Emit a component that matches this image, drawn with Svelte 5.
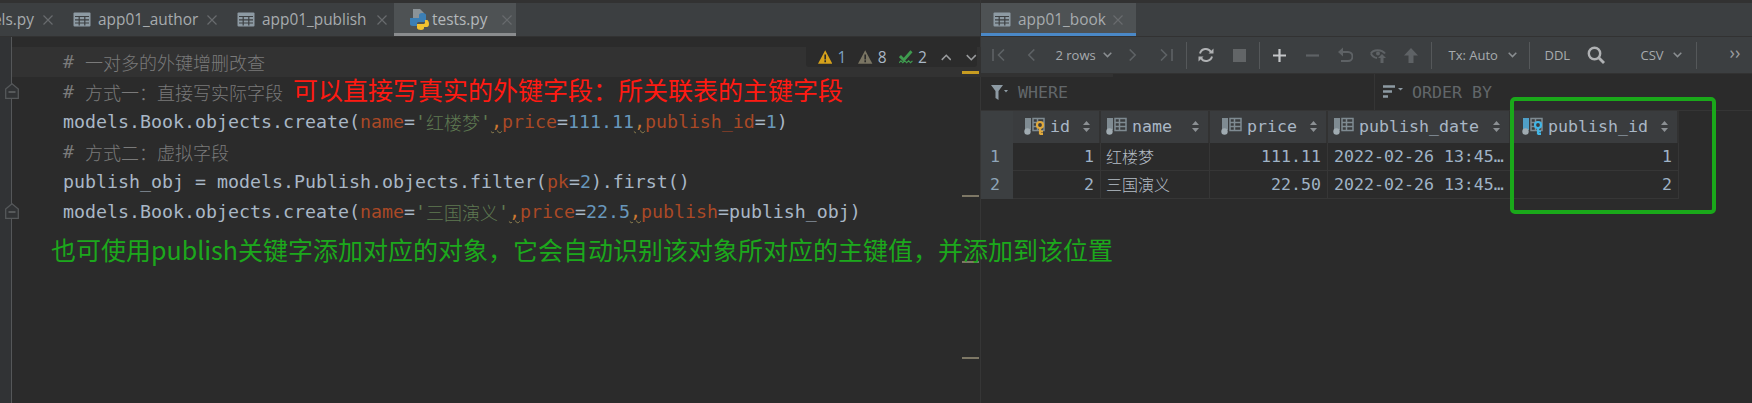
<script>
    // result grid content
    const rows = [
        { n: 1, id: 1, name: '红楼梦', price: '111.11', date: '2022-02-26 13:45…', pub: 1 },
        { n: 2, id: 2, name: '三国演义', price: '22.50', date: '2022-02-26 13:45…', pub: 2 }
    ];
</script>

{#snippet tableIcon()}
    <svg class="ticon" width="18" height="15" viewBox="0 0 18 15">
        <rect x="0.5" y="0.5" width="17" height="14" rx="1" fill="#8d9aa3" />
        <path d="M2 4.500h14M2 7.800h14M2 11h14M6.200 4.500V13.500M11.800 4.500V13.500" stroke="#3c3f41" stroke-width="1.200" fill="none" />
    </svg>
{/snippet}

{#snippet close()}
    <svg class="close" width="10" height="10" viewBox="0 0 10 10">
        <path d="M.5.5l9 9M9.500.5l-9 9" stroke="#686b6e" stroke-width="1.200" />
    </svg>
{/snippet}

{#snippet colIcon(key)}
    <svg class="colicon" width="21" height="18" viewBox="0 0 21 18">
        <rect x="1" y="1" width="6" height="12" fill={key === 'blue' ? '#4f9fc7' : '#7f8b92'} />
        <circle cx="3.500" cy="14.500" r="3.200" fill="#a0abb1" />
        <path d="M9 1.500h11v12H9zM9 5.500h11M9 9.500h11M13.500 1.500v12" stroke="#7f8b92" stroke-width="1.500" fill="none" />
        {#if key === 'gold'}
            <circle cx="16" cy="8" r="3" fill="#3a3c3e" stroke="#e0a93c" stroke-width="2.200" />
            <path d="M16 11v6.500M16 14.500h3M16 17h3" stroke="#e0a93c" stroke-width="2.200" />
        {:else if key === 'blue'}
            <circle cx="16" cy="8" r="3" fill="#3a3c3e" stroke="#41b6e6" stroke-width="2.200" />
            <path d="M16 11v6.500M16 14.500h3M16 17h3" stroke="#41b6e6" stroke-width="2.200" />
        {/if}
    </svg>
{/snippet}

{#snippet sort()}
    <svg class="sort" width="7" height="11" viewBox="0 0 7 11">
        <path d="M3.500 0L7 4H0zM3.500 11L0 7h7z" fill="#8c9094" />
    </svg>
{/snippet}

{#snippet chevron()}
    <svg class="chev" width="9" height="6" viewBox="0 0 9 6">
        <path d="M.7.7l3.800 3.900L8.300.7" stroke="#8a8e91" stroke-width="1.500" fill="none" />
    </svg>
{/snippet}

<div class="page">
    <section class="left">
        <div class="strip"></div>
        <nav class="tabs">
            <div class="tab first"><span>models.py</span>{@render close()}</div>
            <div class="tab author">{@render tableIcon()}<span>app01_author</span>{@render close()}</div>
            <div class="tab publish">{@render tableIcon()}<span>app01_publish</span>{@render close()}</div>
            <div class="tab active">
                <svg class="pyicon" width="20" height="21" viewBox="0 0 20 21">
                    <path d="M4 0h7l4 4v5H4z" fill="#8b9398" />
                    <path d="M1 15V9h9V6c0-1 1-2 3-2h1c2 0 3 1 3 2v5c0 1-1 2-2 2h-5c-2 0-2 1-2 2v2H4c-2 0-3-1-3-2z" fill="#3c7fb5" />
                    <path d="M8 15h6c1 0 2 0 2-2v-2h2c1 0 2 2 2 4s-1 3-2 3h-3v1c0 1-1 2-3 2s-4-1-4-2z" fill="#f2c230" />
                </svg>
                <span>tests.py</span>
                {@render close()}
            </div>
        </nav>

        <div class="editor">
            <div class="gutter"></div>
            <div class="code">
                <div class="line current"><span class="cm"># <i>一对多的外键增删改查</i></span></div>
                <div class="line">
                    <span class="cm"># <i>方式一：直接写实际字段</i></span><span class="note red">可以直接写真实的外键字段：所关联表的主键字段</span>
                </div>
                <div class="line">models.Book.objects.create(<span class="kw">name</span>=<span class="st">'<i>红楼梦</i>'</span><span class="cma">,</span><span class="kw">price</span>=<span class="nm">111.11</span><span class="cma">,</span><span class="kw">publish_id</span>=<span class="nm">1</span>)</div>
                <div class="line"><span class="cm"># <i>方式二：虚拟字段</i></span></div>
                <div class="line">publish_obj = models.Publish.objects.filter(<span class="kw">pk</span>=<span class="nm">2</span>).first()</div>
                <div class="line">models.Book.objects.create(<span class="kw">name</span>=<span class="st">'<i>三国演义</i>'</span><span class="cma">,</span><span class="kw">price</span>=<span class="nm">22.5</span><span class="cma">,</span><span class="kw">publish</span>=publish_obj)</div>
                <div class="note green">也可使用publish关键字添加对应的对象，它会自动识别该对象所对应的主键值，并添加到该位置</div>
            </div>

            <svg class="fold f1" width="14" height="16" viewBox="0 0 14 16">
                <path d="M.7 6L7 .8 13.300 6v9.300H.7z" fill="#313335" stroke="#55585a" stroke-width="1.300" />
                <path d="M3.500 9h7" stroke="#6b6e70" stroke-width="1.300" />
            </svg>
            <svg class="fold f2" width="14" height="16" viewBox="0 0 14 16">
                <path d="M.7 6L7 .8 13.300 6v9.300H.7z" fill="#313335" stroke="#55585a" stroke-width="1.300" />
                <path d="M3.500 9h7" stroke="#6b6e70" stroke-width="1.300" />
            </svg>

            <div class="inspect">
                <svg width="15" height="14" viewBox="0 0 15 14"><path d="M7.500 0L15 14H0z" fill="#d6a21b" /><path d="M7.500 4.500v5M7.500 10.500v2" stroke="#2b2b2b" stroke-width="1.700" /></svg>
                <b>1</b>
                <svg class="gap" width="15" height="14" viewBox="0 0 15 14"><path d="M7.500 0L15 14H0z" fill="#7a7563" /><path d="M7.500 4.500v5M7.500 10.500v2" stroke="#2b2b2b" stroke-width="1.700" /></svg>
                <b class="warm">8</b>
                <svg class="gap" width="15" height="15" viewBox="0 0 15 15"><path d="M1 6l4 4 8-9" stroke="#3f9b4f" stroke-width="3" fill="none" /><path d="M0 13l2-2 2 2 2-2 2 2 2-2 2 2 2-2" stroke="#3f9b4f" stroke-width="1.200" fill="none" /></svg>
                <b class="pale">2</b>
                <svg class="arrow" width="11" height="7" viewBox="0 0 11 7"><path d="M.8 6L5.500 1.200 10.200 6" stroke="#9a9c9e" stroke-width="1.600" fill="none" /></svg>
                <svg class="arrow two" width="11" height="7" viewBox="0 0 11 7"><path d="M.8 1l4.700 4.800L10.200 1" stroke="#9a9c9e" stroke-width="1.600" fill="none" /></svg>
            </div>

            <span class="mark yellow"></span>
            <span class="mark m1"></span>
            <span class="mark m2"></span>
            <span class="mark m3"></span>
        </div>
    </section>

    <section class="console">
        <div class="strip"></div>
        <nav class="tabs">
            <div class="tab book">{@render tableIcon()}<span>app01_book</span>{@render close()}</div>
        </nav>

        <div class="toolbar">
            <button><svg width="13" height="12" viewBox="0 0 13 12"><path d="M1 0v12M12 .5L6.500 6l5.500 5.500" stroke="#5e6265" stroke-width="1.600" fill="none" /></svg></button>
            <button><svg width="8" height="12" viewBox="0 0 8 12"><path d="M7.300.5L1.800 6l5.500 5.500" stroke="#5e6265" stroke-width="1.600" fill="none" /></svg></button>
            <div class="rows"><span>2 rows</span>{@render chevron()}</div>
            <button><svg width="8" height="12" viewBox="0 0 8 12"><path d="M.7.5L6.200 6 .7 11.500" stroke="#5e6265" stroke-width="1.600" fill="none" /></svg></button>
            <button><svg width="13" height="12" viewBox="0 0 13 12"><path d="M12 0v12M1 .5L6.500 6 1 11.500" stroke="#5e6265" stroke-width="1.600" fill="none" /></svg></button>
            <i class="sep"></i>
            <button><svg width="16" height="16" viewBox="0 0 16 16"><path d="M2 6.500A6 6 0 0 1 13 5M14 9.500A6 6 0 0 1 3 11" stroke="#afb1b3" stroke-width="2" fill="none" /><path d="M15.500 1.500v5h-5zM.5 14.500v-5h5z" fill="#afb1b3" /></svg></button>
            <button><svg width="13" height="13" viewBox="0 0 13 13"><rect width="13" height="13" fill="#626567" /></svg></button>
            <i class="sep"></i>
            <button><svg width="13" height="13" viewBox="0 0 13 13"><path d="M6.500 0v13M0 6.500h13" stroke="#c4c6c8" stroke-width="2.200" /></svg></button>
            <button><svg width="13" height="3" viewBox="0 0 13 3"><path d="M0 1.500h13" stroke="#5e6265" stroke-width="2.200" /></svg></button>
            <button><svg width="16" height="16" viewBox="0 0 16 16"><path d="M3 5h8a4 4 0 0 1 0 9H4" stroke="#5e6265" stroke-width="2" fill="none" /><path d="M6 .5v9L1 5z" fill="#5e6265" /></svg></button>
            <button><svg width="17" height="16" viewBox="0 0 17 16"><path d="M1 6.500C3 2 12 2 15 6.500M1 6.500C2 9 4 10.500 7 11" stroke="#5e6265" stroke-width="2" fill="none" /><circle cx="8" cy="6.500" r="2" fill="#5e6265" /><path d="M12 7l4 4h-2.500v5h-3v-5H8z" fill="#5e6265" /></svg></button>
            <button><svg width="14" height="15" viewBox="0 0 14 15"><path d="M7 0l7 7.500H9.500V15h-5V7.500H0z" fill="#5e6265" /></svg></button>
            <i class="sep"></i>
            <div class="drop tx"><span>Tx: Auto</span>{@render chevron()}</div>
            <i class="sep"></i>
            <span class="ddl">DDL</span>
            <button><svg width="18" height="18" viewBox="0 0 18 18"><circle cx="7.500" cy="7.500" r="5.700" stroke="#afb1b3" stroke-width="2.400" fill="none" /><path d="M11.500 11.500l5.500 5.500" stroke="#afb1b3" stroke-width="2.800" /></svg></button>
            <div class="drop csv"><span>CSV</span>{@render chevron()}</div>
            <i class="sep"></i>
            <span class="more">››</span>
        </div>

        <div class="filters">
            <div class="where">
                <svg width="17" height="15" viewBox="0 0 17 15"><path d="M0 0h12L7.500 6v9l-3-2V6z" fill="#8d9aa3" /><path d="M13 5h4l-2 2.500z" fill="#8d9aa3" /></svg>
                <span>WHERE</span>
            </div>
            <div class="order">
                <svg width="20" height="14" viewBox="0 0 20 14"><path d="M0 1.500h12M0 6.500h9M0 11.500h5" stroke="#8d9aa3" stroke-width="2.400" /><path d="M15 3h5l-2.500 2.500z" fill="#8d9aa3" /></svg>
                <span>ORDER BY</span>
            </div>
        </div>

        <div class="grid">
            <div class="corner"></div>
            <div class="hd num">{@render colIcon('gold')}<span>id</span>{@render sort()}</div>
            <div class="hd">{@render colIcon('')}<span class="grow">name</span>{@render sort()}</div>
            <div class="hd num">{@render colIcon('')}<span>price</span>{@render sort()}</div>
            <div class="hd">{@render colIcon('')}<span class="grow">publish_date</span>{@render sort()}</div>
            <div class="hd num">{@render colIcon('blue')}<span>publish_id</span>{@render sort()}</div>

            {#each rows as row (row.n)}
                <div class="rownum">{row.n}</div>
                <div class="td end">{row.id}</div>
                <div class="td zh">{row.name}</div>
                <div class="td end">{row.price}</div>
                <div class="td">{row.date}</div>
                <div class="td end">{row.pub}</div>
            {/each}
        </div>

        <div class="highlight"></div>
    </section>
</div>

<style>
    :global(body) {
        margin: 0;
        background: #2b2b2b;
    }

    .page {
        display: flex;
        width: 1752px;
        height: 403px;
        overflow: hidden;
        font-family: "Open Sans", "Noto Sans CJK SC", sans-serif;
    }

    .left {
        width: 980px;
        flex: none;
        border-right: 1px solid #363636;
        display: flex;
        flex-direction: column;
    }

    .console {
        flex: 1;
        position: relative;
        display: flex;
        flex-direction: column;
        min-width: 0;
    }

    .strip {
        height: 3px;
        flex: none;
        background: #323232;
    }

    .tabs {
        height: 33px;
        flex: none;
        display: flex;
        background: #3c3f41;
        border-bottom: 1px solid #323232;
        overflow: hidden;
    }

    .tab {
        display: flex;
        align-items: center;
        flex: none;
        height: 33px;
        padding: 0 7px 0 13px;
        color: #a7abae;
        font-size: 15.400px;
        box-sizing: border-box;
    }

    .tab span {
        flex: none;
    }

    .tab.first {
        width: 60px;
        padding: 0 7px 0 0;
        justify-content: flex-end;
        overflow: hidden;
    }

    .tab.author {
        width: 164px;
    }

    .tab.publish {
        width: 170px;
    }

    .tab .ticon {
        margin-right: 7px;
        flex: none;
    }

    .tab .close {
        margin-left: auto;
        flex: none;
    }

    .tab.first .close {
        margin-left: 9px;
    }

    .tab.active {
        width: 122px;
        background: #4e5254;
        border-bottom: 3px solid #8a8c8e;
        padding: 3px 4px 0 15px;
        color: #b4b8bb;
    }

    .tab.active .pyicon {
        margin-right: 3px;
        flex: none;
    }

    .tab.book {
        width: 155px;
        background: #4e5254;
        border-bottom: 3px solid #4a88c7;
        padding: 3px 13px 0 12px;
    }

    /* editor */
    .editor {
        position: relative;
        flex: 1;
        display: flex;
        font-family: "DejaVu Sans Mono", "Noto Sans CJK SC", monospace;
        font-size: 18.270px;
        color: #a9b7c6;
    }

    .gutter {
        width: 11px;
        flex: none;
        background: #313335;
        border-right: 1px solid #555759;
    }

    .code {
        flex: 1;
        padding-top: 10px;
    }

    .line {
        height: 30px;
        line-height: 30px;
        padding-left: 51px;
        white-space: pre;
    }

    .line.current {
        background: #323232;
    }

    .line i {
        font-style: normal;
        font-size: 18px;
        line-height: 0;
        vertical-align: -1.500px;
        font-family: "Noto Sans CJK SC", sans-serif;
        font-weight: 300;
    }

    .cm {
        color: #7a7a7a;
    }

    .kw {
        color: #aa4926;
    }

    .st {
        color: #5f7a52;
    }

    .nm {
        color: #6897bb;
    }

    .cma {
        color: #cc7832;
        text-decoration: underline wavy #8f7f4e 1px;
        text-underline-offset: 1px;
    }

    .note {
        font-family: "Noto Sans CJK SC", sans-serif;
        white-space: nowrap;
    }

    .red {
        color: #ff1a12;
        font-size: 25px;
        line-height: 0;
        margin-left: 10px;
        vertical-align: -2px;
    }

    .green {
        color: #1ca81c;
        font-size: 25px;
        line-height: 30px;
        margin: 7px 0 0 39px;
        position: relative;
        z-index: 2;
    }

    .fold {
        position: absolute;
        left: 5px;
    }

    .f1 {
        top: 46px;
    }

    .f2 {
        top: 166px;
    }

    .inspect {
        position: absolute;
        top: 10px;
        left: 806px;
        width: 171px;
        height: 20px;
        box-sizing: border-box;
        padding-left: 12px;
        display: flex;
        align-items: center;
        background: #2b2b2b;
        font-family: "Open Sans", sans-serif;
        font-size: 15.500px;
        border-radius: 0 0 3px 3px;
    }

    .inspect b {
        font-weight: 400;
        color: #7da4c4;
        margin-left: 5px;
    }

    .inspect b.warm {
        color: #a9b7c6;
    }

    .inspect b.pale {
        color: #a9b7c6;
    }

    .inspect .gap {
        margin-left: 12px;
    }

    .inspect .arrow {
        margin-left: 14px;
    }

    .inspect .arrow.two {
        margin-left: 15px;
    }

    .mark {
        position: absolute;
        left: 962px;
        width: 17px;
        height: 2px;
        background: #7d7765;
    }

    .mark.yellow {
        top: 34px;
        height: 2.500px;
        background: #c79c21;
    }

    .m1 {
        top: 158px;
    }

    .m2 {
        top: 224px;
    }

    .m3 {
        top: 320px;
    }

    /* database console */
    .toolbar {
        height: 36px;
        flex: none;
        display: flex;
        align-items: center;
        background: #3c3f41;
        border-bottom: 1px solid #323232;
        padding-left: 0.500px;
        font-size: 13px;
        color: #a7abae;
    }

    .toolbar button {
        all: unset;
        width: 33px;
        height: 33px;
        flex: none;
        display: flex;
        align-items: center;
        justify-content: center;
    }

    .toolbar .sep {
        width: 1px;
        height: 27px;
        flex: none;
        margin: 0 3px;
        background: #55585a;
    }

    .rows {
        width: 69px;
        flex: none;
        padding-left: 8px;
        box-sizing: border-box;
        display: flex;
        align-items: center;
        gap: 7px;
        white-space: nowrap;
    }

    .drop {
        display: flex;
        align-items: center;
        flex: none;
        white-space: nowrap;
    }

    .tx {
        width: 91px;
        padding-left: 14px;
        box-sizing: border-box;
        gap: 10px;
    }

    .ddl {
        width: 47px;
        flex: none;
        padding-left: 12px;
        box-sizing: border-box;
    }

    .csv {
        width: 80px;
        padding-left: 28px;
        box-sizing: border-box;
        gap: 9px;
    }

    .more {
        margin-left: 30px;
        color: #9a9c9e;
        font-size: 18px;
        line-height: 1;
        margin-top: -6px;
    }

    .filters {
        height: 37px;
        flex: none;
        display: flex;
        box-sizing: border-box;
        border-bottom: 1px solid #353535;
        font-family: "DejaVu Sans Mono", monospace;
        font-size: 16.600px;
        color: #62676a;
    }

    .where {
        width: 394px;
        flex: none;
        box-sizing: border-box;
        padding-left: 10px;
        display: flex;
        align-items: center;
        gap: 10px;
        border-right: 1px solid #353535;
    }

    .order {
        display: flex;
        align-items: center;
        padding-left: 8px;
        gap: 9px;
    }

    .grid {
        display: grid;
        grid-template-columns: 32px 88px 109px 118px 183px 168px;
        grid-template-rows: 32px 28px 28px;
        width: max-content;
        font-family: "DejaVu Sans Mono", "Noto Sans CJK SC", monospace;
        font-size: 16.600px;
        color: #a9b7c6;
    }

    .corner,
    .rownum {
        background: #3c3f41;
    }

    .rownum {
        display: flex;
        align-items: center;
        justify-content: center;
        color: #8fa5b8;
        padding: 0 4px 1px 0;
        box-sizing: border-box;
    }

    .hd {
        display: flex;
        align-items: center;
        background: #3a3c3e;
        border-right: 2px solid #323232;
        padding: 0 9px 2px 5px;
        box-sizing: border-box;
        color: #a9b7c6;
    }

    .hd.num {
        justify-content: flex-end;
    }

    .hd .colicon {
        margin-right: 5px;
    }

    .hd .sort {
        margin-left: 13px;
    }

    .hd .grow {
        flex: 1;
    }

    .td {
        display: flex;
        align-items: center;
        padding: 0 6px 1px;
        box-sizing: border-box;
        white-space: nowrap;
        overflow: hidden;
        border-right: 1px solid #363636;
        border-bottom: 1px solid #363636;
        color: #9fb3c6;
    }

    .td.end {
        justify-content: flex-end;
    }

    .td.zh {
        padding-left: 5px;
        font-family: "Noto Sans CJK SC", sans-serif;
        font-size: 16px;
        font-weight: 300;
        color: #b5bec7;
    }

    .highlight {
        position: absolute;
        left: 529px;
        top: 97px;
        width: 206px;
        height: 117px;
        box-sizing: border-box;
        border: 4px solid #1aa81a;
        border-radius: 5px;
        z-index: 3;
    }
</style>
